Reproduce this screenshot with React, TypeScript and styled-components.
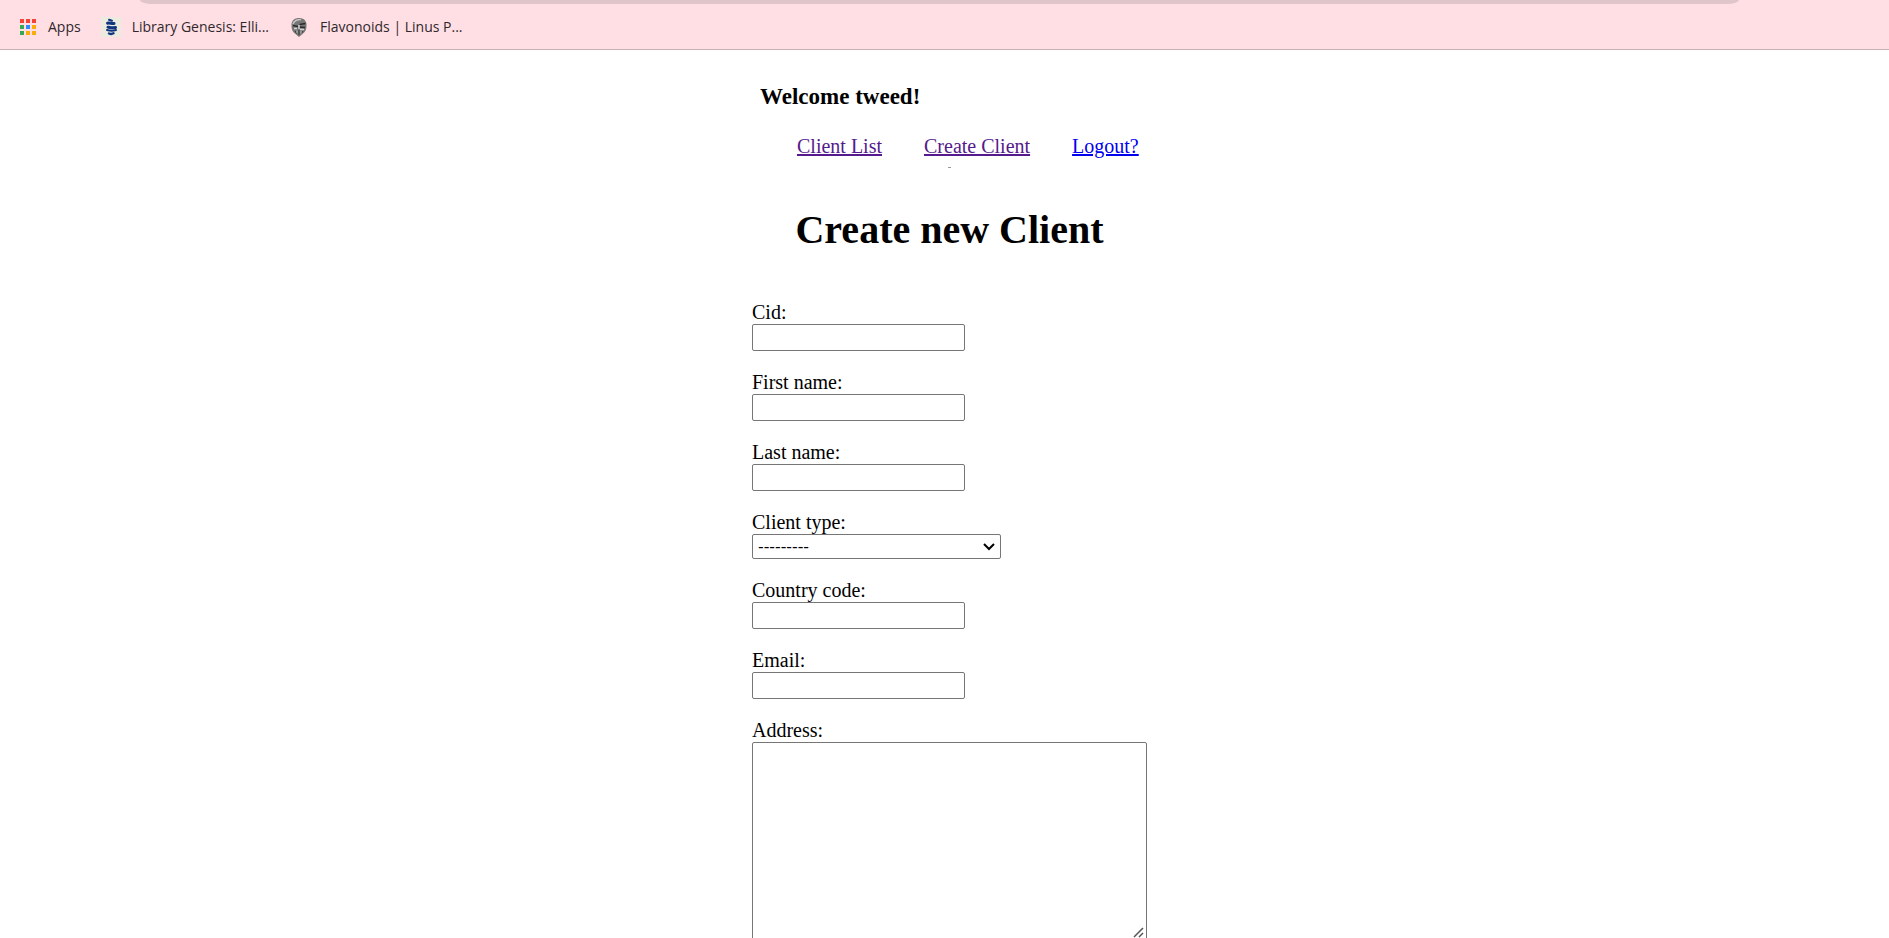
import React from "react";
import styled, { createGlobalStyle } from "styled-components";

const GlobalStyle = createGlobalStyle`
  *, *::before, *::after { box-sizing: border-box; }
  body { margin: 0; background: #fff; color: #000; font-family: "Liberation Serif", "Times New Roman", serif; font-size: 20px; line-height: 23px; }
`;

const Window = styled.div`
  display: flex;
  flex-direction: column;
  height: 100vh;
`;

const Chrome = styled.header`
  flex: none;
  display: flex;
  flex-direction: column;
  height: 50px;
  background: #ffdfe4;
  border-bottom: 1px solid #c8b2b6;
`;

const AddressBarEdge = styled.div`
  height: 4px;
  margin: 0 150px 0 140px;
  background: #e0c5ca;
  border-radius: 0 0 12px 12px / 0 0 4px 4px;
`;

const Bookmarks = styled.nav`
  flex: 1;
  display: flex;
  align-items: center;
  gap: 20px;
  padding: 0 18px;
`;

const Bookmark = styled.a`
  display: flex;
  align-items: center;
  gap: 11px;
  color: #30272d;
  font: 14px/20px "Open Sans", "Segoe UI", sans-serif;
  text-decoration: none;
  white-space: nowrap;
`;

const Viewport = styled.div`
  flex: 1;
  min-height: 0;
  overflow-y: auto;
  scrollbar-width: none;
  padding: 33px 0 20px 10px;
`;

const Content = styled.main`
  width: 395px;
  margin: 0 auto;
`;

const Welcome = styled.h3`
  margin: 0 0 25px;
  padding-left: 8px;
  font-size: 23px;
  line-height: 27px;
`;

const Menu = styled.nav`
  display: flex;
  gap: 42px;
  padding-left: 45px;
  white-space: nowrap;
`;

const MenuLink = styled.a<{ $visited?: boolean }>`
  color: ${(p) => (p.$visited ? "#551a8b" : "#0000ee")};
  text-decoration: underline;
`;

const Tick = styled.div`
  width: 3px;
  height: 1px;
  margin: 9px auto 0;
  background: #999;
`;

const Title = styled.h1`
  margin: 39px 0 48px;
  font-size: 40px;
  line-height: 46px;
  text-align: center;
`;

const Form = styled.form`
  display: flex;
  flex-direction: column;
  gap: 20px;
`;

const Field = styled.div`
  display: flex;
  flex-direction: column;
  align-items: flex-start;
`;

const TextInput = styled.input`
  width: 213px;
  height: 27px;
  padding: 1px 3px;
  border: 1px solid #767676;
  border-radius: 2px;
  font: 17px "Liberation Sans", Arial, sans-serif;
`;

const SelectBox = styled.div`
  display: grid;
  align-items: center;
  width: 249px;

  > * { grid-area: 1 / 1; }
  > svg { justify-self: end; margin-right: 5px; pointer-events: none; }
`;

const Select = styled.select`
  width: 100%;
  height: 25px;
  padding: 0 5px;
  appearance: none;
  background: #fff;
  border: 1px solid #767676;
  border-radius: 2px;
  color: #000;
  font: 17px/20px "Liberation Sans", Arial, sans-serif;
`;

const TextAreaBox = styled.div`
  display: grid;
  width: 100%;

  > * { grid-area: 1 / 1; }
  > svg { place-self: end; margin: 0 3px 3px 0; pointer-events: none; }
`;

const TextArea = styled.textarea`
  width: 100%;
  height: 199px;
  padding: 3px;
  border: 1px solid #767676;
  border-radius: 2px;
  font: 17px "Liberation Mono", monospace;

  &::-webkit-resizer { background: transparent; }
`;

const appColors = ["#f44336", "#f44336", "#f44336", "#34a853", "#2f8bff", "#fbab0a", "#34a853", "#fbab0a", "#fbab0a"];

const AppsIcon = () => (
  <svg width="19" height="18" viewBox="0 0 19 18" aria-hidden="true">
    {appColors.map((color, i) => (
      <rect key={i} x={2 + (i % 3) * 6} y={1 + Math.floor(i / 3) * 6} width="4" height="4" fill={color} />
    ))}
  </svg>
);

const LibraryIcon = () => (
  <svg width="20" height="20" viewBox="0 0 20 20" aria-hidden="true">
    <rect width="20" height="20" fill="#ebebdf" />
    <g fill="none" stroke="#10357f" strokeLinecap="round">
      <path d="M8 2.8l3 1" strokeWidth="2" />
      <path d="M6.500 6.200c2-.5 4 .6 6.500.3" strokeWidth="3" />
      <path d="M7 10.200c2 .8 4 .8 7.500.2" strokeWidth="3" />
      <path d="M6 13c3 .8 6 .9 9 0" strokeWidth="2" />
      <path d="M8 16.500c2 .8 3 .7 4.500-.2" strokeWidth="2.400" />
    </g>
  </svg>
);

const CrestIcon = () => (
  <svg width="20" height="20" viewBox="0 0 20 20" aria-hidden="true">
    <path d="M10 1C6 1 3 3 2.500 7c-.3 5 1 8 4 10l3.500 3 3.500-3c3-2 4.300-5 4-10C17 3 14 1 10 1z" fill="#777" />
    <path d="M4 7c1-3 4-4.500 8-4.500" fill="none" stroke="#c8c4c5" strokeWidth="1.500" />
    <path d="M4 8.500l5 1M10.500 7.500l6-1M10 10l6 .5" stroke="#2b2b2b" strokeWidth="1.700" />
    <path d="M5 11.500h3M11 12.500h4M10 8v4" stroke="#d5d1d2" strokeWidth="1.500" />
    <path d="M6 14l2 3M10 13v5M14 14l-2 3" stroke="#333" strokeWidth="1" />
    <path d="M8 13.500v3M12 14v3" stroke="#bbb" strokeWidth="1" />
  </svg>
);

const Chevron = () => (
  <svg width="14" height="10" viewBox="0 0 14 10" aria-hidden="true">
    <path d="M2 2l5 5 5-5" fill="none" stroke="#000" strokeWidth="2" />
  </svg>
);

const ResizeGrip = () => (
  <svg width="11" height="11" viewBox="0 0 11 11" aria-hidden="true">
    <path d="M1 10L10 1M6 10l4-4" fill="none" stroke="#555" strokeWidth="1.500" />
  </svg>
);

const TextField = ({ id, label }: { id: string; label: string }) => (
  <Field>
    <label htmlFor={id}>{label}:</label>
    <TextInput id={id} name={id} type="text" />
  </Field>
);

export default function App() {
  return (
    <Window>
      <GlobalStyle />
      <Chrome>
        <AddressBarEdge />
        <Bookmarks aria-label="Bookmarks">
          <Bookmark href="#apps"><AppsIcon />Apps</Bookmark>
          <Bookmark href="#library"><LibraryIcon />Library Genesis: Elli...</Bookmark>
          <Bookmark href="#flavonoids"><CrestIcon />Flavonoids | Linus P...</Bookmark>
        </Bookmarks>
      </Chrome>
      <Viewport>
        <Content>
          <Welcome>Welcome tweed!</Welcome>
          <Menu aria-label="Main">
            <MenuLink href="#clients" $visited>Client List</MenuLink>
            <MenuLink href="#create" $visited>Create Client</MenuLink>
            <MenuLink href="#logout">Logout?</MenuLink>
          </Menu>
          <Tick />
          <Title>Create new Client</Title>
          <Form>
            <TextField id="cid" label="Cid" />
            <TextField id="first_name" label="First name" />
            <TextField id="last_name" label="Last name" />
            <Field>
              <label htmlFor="client_type">Client type:</label>
              <SelectBox>
                <Select id="client_type" name="client_type">
                  <option value="">---------</option>
                </Select>
                <Chevron />
              </SelectBox>
            </Field>
            <TextField id="country_code" label="Country code" />
            <TextField id="email" label="Email" />
            <Field>
              <label htmlFor="address">Address:</label>
              <TextAreaBox>
                <TextArea id="address" name="address" />
                <ResizeGrip />
              </TextAreaBox>
            </Field>
          </Form>
        </Content>
      </Viewport>
    </Window>
  );
}
